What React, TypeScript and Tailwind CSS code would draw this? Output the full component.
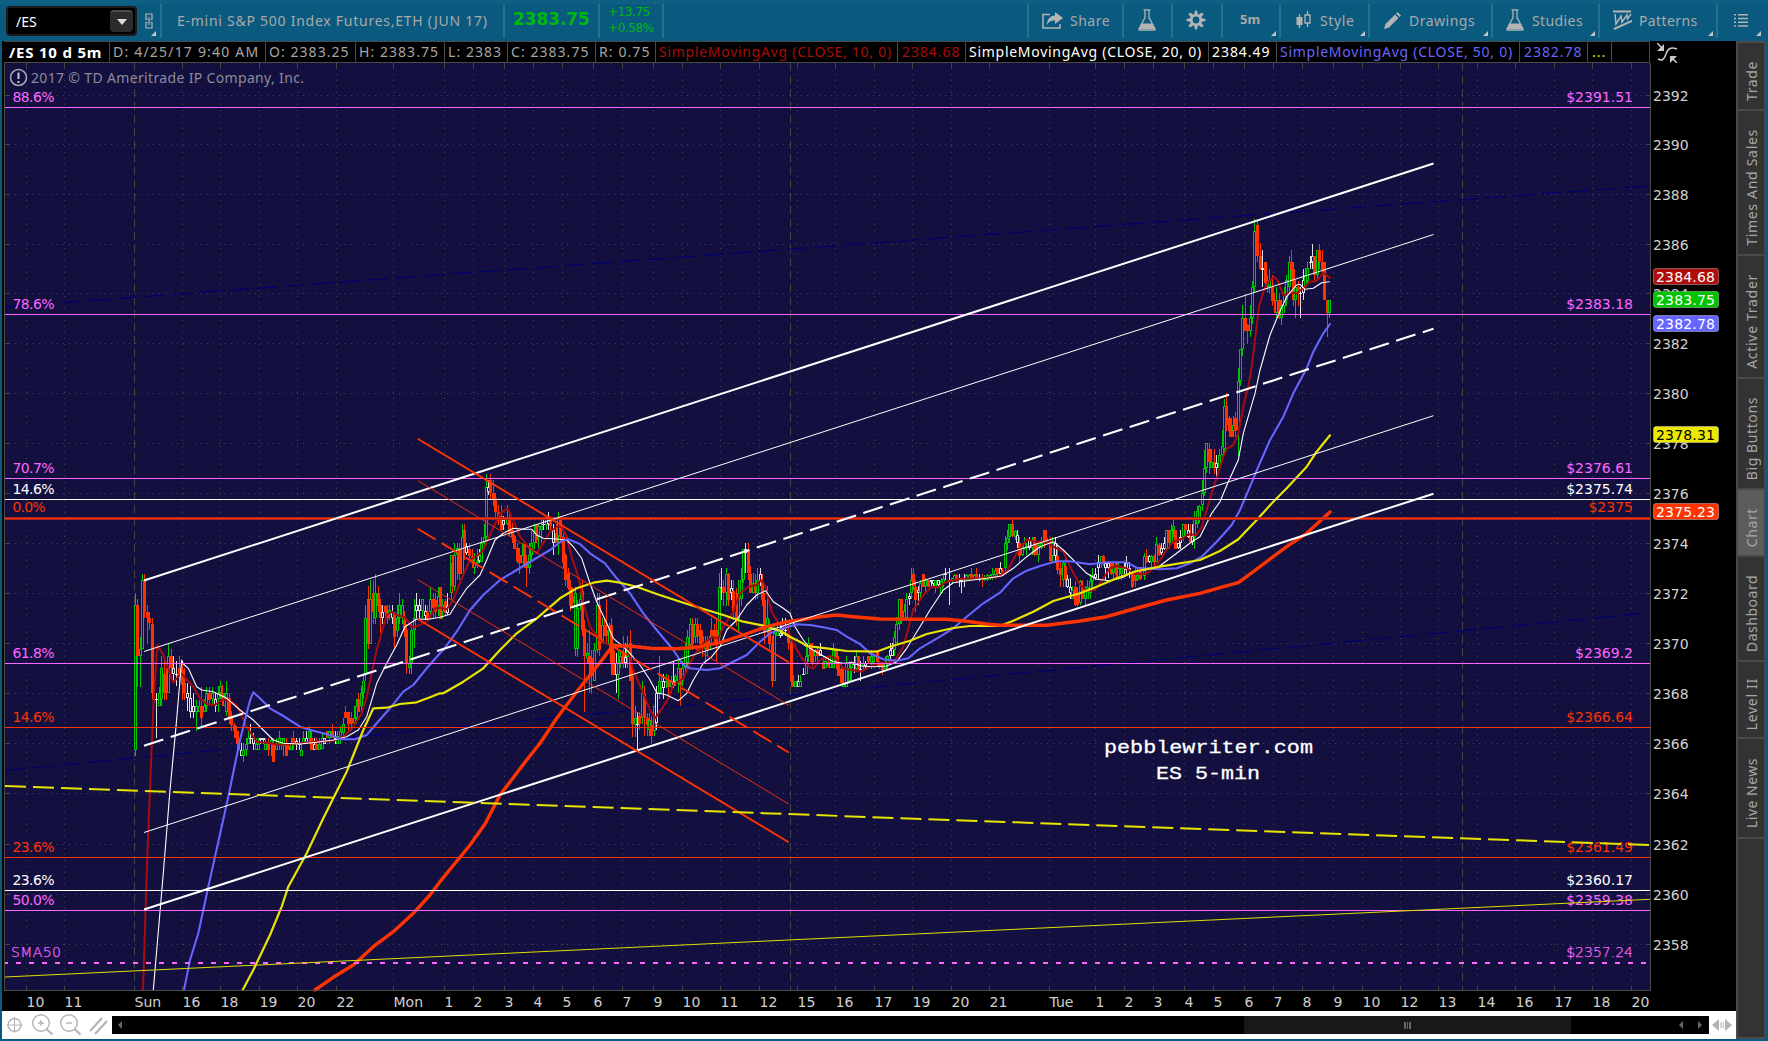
import type { ReactNode } from 'react'

const SANS = "font-['Noto_Sans','Open_Sans',sans-serif]";

type Part = { ox: number; oy: number; pts: string };

// every part is stored in thirds of a pixel, relative to its own origin
const ORIGINS = [
  [100, 540],
  [390, 420],
  [780, 500],
  [1140, 200],
];

const toParts = (rows: string[]): Part[] =>
  rows.map((pts, i) => ({ ox: ORIGINS[i][0], oy: ORIGINS[i][1], pts }));

const joinLine = (rows: string[]) => {
  const out: string[] = [];
  let last = -1;
  toParts(rows).forEach(({ ox, oy, pts }) => {
    pts.split(',').forEach((p) => {
      const [px, py] = p.trim().split(' ').map(Number);
      const x = ox + px / 3;
      if (x <= last) return;
      last = x;
      out.push(`${x.toFixed(1)},${(oy + py / 3).toFixed(1)}`);
    });
  });
  return out.join(' ');
};

const SMA10 = joinLine([
  '129 1350,142 950,160 500,172 315,190 345,220 428,243 400,280 440,300 475,320 492,345 495,370 478,395 485,410 495,440 560,470 605,500 608,540 614,600 610,650 605,700 602,730 590,760 560,785 520,800 470,830 330,860 225,877 215,890 225,915 232,935 262,960 255,985 240,1005 205,1020 203',
  '150 563,170 568,190 540,215 475,240 420,265 405,280 390,300 345,330 280,352 265,370 300,390 350,415 380,440 400,460 370,480 335,500 320,515 320,530 350,545 410,565 470,580 550,600 620,630 660,665 680,690 675,715 690,730 750,760 820,780 870,795 895,820 860,835 835,850 795,880 775,910 710,940 670,965 652,985 655,1000 620,1030 575,1050 520,1075 500,1100 495,1113 480,1125 495,1145 575,1165 610,1190 620,1210 670,1235 715,1260 742',
  '70 490,100 506,120 480,150 468,170 478,190 505,215 510,245 515,270 500,300 487,320 490,345 480,370 440,400 330,430 285,455 260,475 262,500 245,540 236,600 235,650 232,680 215,710 160,740 118,765 125,800 125,820 140,850 155,870 200,900 255,920 272,945 270,970 235,990 205,1010 198,1040 205,1065 222,1095 222',
  '25 1118,50 1095,80 1050,100 1025,130 1015,145 1003,170 1005,185 980,200 930,215 880,235 820,250 770,262 745,280 735,295 700,310 620,325 560,335 500,345 420,357 320,370 275,385 245,403 230,415 245,430 285,450 278,470 280,490 265,510 245,530 243,550 218,570 234',
]);

const SMA20 = joinLine([
  '160 1350,190 1000,210 750,228 560,245 360,250 372,265 385,290 440,305 450,340 455,380 475,420 510,460 540,490 570,520 600,550 610,600 612,650 607,700 600,740 590,775 570,800 530,830 430,860 370,890 315,915 260,950 237,985 238,1020 232',
  '150 592,180 583,200 550,230 505,270 465,290 420,315 360,340 340,370 325,400 328,425 328,440 345,460 355,500 357,530 360,550 380,575 415,600 490,620 545,650 610,670 655,700 680,720 700,750 735,780 780,800 818,830 825,865 842,890 820,910 780,940 730,965 710,990 680,1010 630,1040 600,1070 555,1100 525,1127 512,1150 545,1180 565,1200 580,1215 620,1240 660,1260 685',
  '70 430,90 455,130 468,160 485,190 490,215 488,245 498,280 500,320 498,350 485,380 445,420 380,450 330,490 270,520 248,560 242,620 235,665 228,700 205,740 170,780 140,820 125,850 150,890 190,920 220,950 238,990 242,1030 232,1060 215',
  '50 1105,90 1075,130 1045,155 1025,180 1010,200 970,215 940,240 905,265 845,295 780,310 700,345 580,360 510,390 405,415 345,440 290,470 255,480 253,495 268,520 265,545 248,568 245',
]);

const SMA50 = joinLine([
  '252 1350,270 1260,295 1180,325 1040,345 950,385 770,420 600,445 500,452 475,460 457,475 470,510 505,550 528,600 560,640 572,690 585,720 598,765 598,800 585,830 550,870 505,910 455,940 435,980 385,1020 340',
  '160 690,200 635,240 570,280 525,330 480,380 450,430 420,480 390,515 363,535 358,570 372,600 400,645 430,680 475,720 520,760 580,800 630,850 690,880 735,900 745,950 750,990 745,1040 720,1070 705,1110 665,1140 640,1180 625,1220 613',
  '90 375,130 382,170 390,200 410,240 432,270 460,310 478,350 482,385 475,420 445,480 410,520 385,560 350,610 310,660 278,700 235,740 212,780 198,830 184,870 184,930 193,980 187,1040 187,1070 203',
  '60 1108,110 1105,150 1090,185 1070,230 1025,275 975,300 930,330 860,355 800,390 720,430 650,460 580,500 505,520 455,550 400,570 372',
]);

const SMA100 = joinLine([
  '428 1350,460 1290,510 1185,545 1100,565 1040,620 940,670 835,700 775,740 695,790 570,820 505,860 503,900 492,950 487,990 472,1020 460',
  '160 820,220 785,280 745,330 690,380 640,440 595,510 535,560 505,610 488,650 482,690 488,740 500,800 522,880 548,950 570,1000 585,1060 605,1120 617,1170 632,1200 650,1235 668',
  '80 438,140 445,200 453,290 455,330 440,390 422,440 402,520 384,570 378,660 378,700 362,760 335,820 303,900 280,950 260,1010 235,1070 213',
  '60 1100,180 1080,240 1053,295 1018,350 960,400 905,440 865,500 800,530 755,570 706',
]);

const SMA200 = joinLine([
  '645 1350,700 1312,760 1275,820 1220,880 1175,940 1120,990 1065,1020 1025',
  '240 1275,285 1212,330 1125,410 1020,450 970,500 895,560 815,600 765,640 715,668 677,720 678,780 685,860 686,930 680,990 668,1060 645,1130 620,1190 605,1230 600',
  '120 350,170 345,220 350,300 357,500 358,560 364,620 372,660 376,800 376,900 363,980 350,1050 330',
  '80 1200,180 1180,240 1163,295 1148,340 1115,400 1070,440 1040,500 1000,570 936',
]);

// kind x high bodyTop bodyBottom low
const CANDLES = toParts([
  'g 106 160 196 631 650,r 112 178 196 350 442,g 121 292 328 350 442,g 127 102 122 328 328,r 133 102 122 217 235,r 142 196 217 235 312,r 148 217 235 250 272,r 157 235 254 460 480,r 161 380 460 480 480,w 169 460 478 478 594,g 178 443 460 498 498,g 184 350 385 478 498,r 193 365 404 460 480,r 199 385 404 460 480,g 205 310 350 460 460,r 214 328 350 385 404,w 220 350 385 404 430,w 229 365 404 404 440,r 238 350 385 412 430,r 247 370 390 435 480,r 254 385 430 460 480,w 262 430 460 475 515,w 271 440 475 517 535,w 280 460 498 517 535,g 289 480 498 517 575,g 298 480 498 517 517,r 304 443 498 535 558,g 312 478 498 517 517,g 319 443 460 498 517,r 327 443 460 480 498,g 337 443 460 478 498,w 345 460 478 498 517,g 354 440 460 478 517,g 361 423 440 460 478,r 366 435 460 480 498,g 373 460 478 498 498,g 380 423 460 517 530,r 388 460 475 535 552,r 395 515 530 555 575,r 402 550 555 575 595,r 410 560 575 594 612,r 416 575 594 630 632,w 424 610 630 650 650,g 430 610 632 650 668,g 438 595 612 632 650,g 445 575 594 612 612,w 452 552 594 594 612,w 460 580 594 612 632,g 468 594 612 630 630,g 475 594 612 630 630,w 482 594 594 600 612,w 490 594 594 600 612,g 497 594 612 630 630,r 505 594 612 630 650,g 513 594 600 612 650,r 521 594 612 668 668,g 529 594 612 632 632,g 537 575 594 612 632,g 544 594 594 612 632,g 551 594 594 620 650,r 558 594 612 650 650,r 566 612 620 632 632,g 574 594 612 632 632,r 581 575 594 612 632,w 590 594 605 612 632,w 598 594 612 612 632,g 604 612 630 650 650,g 611 575 594 612 612,w 619 575 594 612 612,g 627 560 575 594 612,r 635 575 594 632 632,w 643 594 612 632 632,r 650 594 612 632 632,g 658 594 612 630 632,g 666 580 594 628 628,w 673 594 594 612 612,r 681 575 575 594 594,g 688 575 575 594 612,r 697 552 575 594 594,w 705 575 594 600 612,g 713 575 590 612 612,g 721 560 575 600 612,g 729 535 552 580 594,r 737 498 517 535 535,r 746 517 517 552 575,r 754 517 535 552 575,g 762 500 535 550 565,g 769 478 498 535 552,r 775 460 478 517 517,g 783 440 460 498 517,g 790 404 423 460 478,g 796 196 235 404 423,r 805 140 178 312 328,g 811 122 178 312 312,r 819 122 160 217 254,g 826 102 160 235 254,r 834 140 160 200 217,r 841 178 196 235 280,w 848 196 217 235 254,r 856 196 200 217 235,r 862 196 210 235 254,g 869 196 210 225 240,w 877 196 217 235 254,r 884 217 217 292 325,g 891 196 235 275 292,g 898 160 196 235 254,g 907 178 196 235 254,r 914 215 240 270 292,r 920 254 272 370 404,g 928 350 370 385 404,g 935 254 272 370 404,g 942 178 235 272 325',
  'w 80 520 556 575 595,w 88 538 556 575 595,g 97 538 538 575 595,w 105 556 575 590 600,r 113 556 577 597 597,g 121 502 538 577 597,r 130 520 538 565 595,r 137 520 540 577 595,g 144 502 530 560 590,r 151 502 502 597 597,g 158 538 556 577 597,r 166 538 545 580 590,w 173 520 560 580 585,g 183 406 406 520 540,r 188 406 430 500 520,g 194 370 406 502 515,g 203 370 385 406 480,r 209 370 388 463 480,g 218 312 352 463 463,r 223 312 330 388 420,w 230 370 380 400 406,r 238 370 388 410 430,r 246 388 410 430 445,g 254 400 430 445 463,g 262 388 425 430 445,w 268 388 406 425 430,g 275 352 370 428 428,g 282 312 352 370 388,g 290 162 202 352 370,w 296 180 202 217 225,r 302 162 180 220 240,r 310 180 220 240 260,r 316 220 236 276 292,r 325 255 276 292 315,r 333 255 290 330 330,w 340 290 300 315 330,g 352 255 298 312 315,r 359 280 298 340 352,r 366 310 330 352 370,r 373 345 350 388 388,r 381 370 385 425 430,r 388 385 406 430 463,g 396 370 406 430 430,r 403 370 372 440 445,r 409 406 425 445 502,g 418 370 406 445 463,g 425 335 370 406 425,g 432 312 340 370 388,r 438 312 315 360 370,g 446 312 318 352 385,g 453 298 318 330 370,w 460 298 312 312 330,g 468 298 298 315 330,w 475 276 292 312 330,r 482 290 300 318 330,w 490 312 330 370 406,r 498 312 340 370 370,g 506 276 298 350 406,r 512 292 298 352 370,r 520 340 352 430 445,r 527 400 406 480 500,r 534 445 460 505 512,r 541 480 502 560 575,r 548 502 530 550 560,g 556 502 520 688 710,g 563 540 565 688 712,g 570 490 538 560 570,r 577 480 515 630 650,r 583 600 625 710 878,g 592 670 700 715 730,r 598 630 708 730 820,r 604 690 715 770 820,g 612 670 690 785 785,g 621 520 556 690 700,r 628 520 556 690 710,g 636 595 615 670 670,r 643 600 615 640 650,r 650 538 630 650 670,g 657 610 630 675 690,r 665 595 615 730 765,r 671 670 690 765 765,w 678 700 730 765 820,g 685 690 730 765 838,g 692 690 710 730 745,r 700 650 700 730 745,w 707 670 712 730 745,g 713 650 690 712 745,r 721 630 670 785 785,r 728 740 770 912 952,g 736 858 895 915 952,w 743 878 912 912 990,r 749 878 890 912 930,g 757 785 820 895 912,r 764 800 820 895 950,r 772 880 895 915 950,g 779 880 900 930 950,r 785 890 915 950 970,g 793 858 860 935 950,w 799 800 820 910 930,g 808 708 785 820 838,g 814 762 785 805 820,w 820 762 785 805 838,g 828 762 785 790 805,r 835 765 780 802 838,g 843 770 785 802 820,w 850 725 785 800 805,g 857 762 770 785 800,g 864 715 745 790 820,r 871 745 762 795 860,g 878 725 745 785 800,g 886 670 688 745 762,g 893 630 652 730 745,g 901 595 612 675 690,r 908 595 612 672 690,g 915 595 612 652 670,r 922 595 612 650 670,r 930 612 632 672 690,r 938 632 650 672 712,g 945 650 670 688 730,r 952 650 665 690 710,g 960 630 650 672 690,r 964 595 630 650 672,r 972 612 632 652 672,r 980 600 632 672 725,g 988 460 502 652 670,w 995 445 502 502 540,r 1001 480 502 520 560,g 1010 445 463 520 560,r 1016 460 463 540 560,w 1024 480 505 520 540,r 1031 480 515 578 600,r 1038 505 578 598 620,g 1046 480 520 598 635,g 1054 445 480 538 560,g 1060 388 388 480 490,w 1067 370 388 400 460,r 1075 370 390 460 480,r 1082 440 462 520 520,g 1090 460 490 520 520,r 1097 463 490 520 540,g 1103 445 480 520 538,w 1112 445 463 490 500,r 1118 463 485 540 560,r 1124 520 540 640 672,g 1131 500 595 630 640,r 1139 600 630 672 690,r 1147 650 670 785 802,g 1154 620 640 785 785,g 1162 612 635 650 650,w 1170 612 640 650 655,w 1178 595 615 630 650,w 1185 595 630 632 650,r 1195 612 640 670 690,r 1203 650 670 785 802,r 1210 765 785 802 802,g 1217 785 785 802 802,w 1225 765 785 802 802,g 1232 765 785 802 802,w 1240 745 762 765 765',
  'g 78 440 470 522 522,g 85 412 430 468 488,r 91 430 432 468 488,r 98 430 450 490 500,g 106 448 455 468 488,r 113 440 450 470 488,w 121 430 450 468 470,r 130 468 488 508 508,g 137 468 485 505 505,r 145 468 488 500 506,g 152 468 488 505 505,g 160 430 450 505 505,r 168 450 452 490 508,r 176 470 490 530 530,r 183 490 508 550 550,g 191 505 550 562 562,g 199 470 490 562 562,g 207 485 505 545 545,g 215 485 488 505 540,w 222 470 488 495 520,g 229 450 468 508 510,r 235 468 470 508 512,w 241 485 508 512 545,g 249 468 490 500 508,w 257 485 490 500 508,r 266 468 470 488 490,g 274 450 470 490 508,g 281 468 470 488 490,r 292 450 452 488 500,r 299 485 488 500 508,r 307 488 490 510 525,g 315 468 488 508 508,g 322 465 470 490 508,w 330 430 450 470 490,w 337 430 445 468 470,g 343 395 412 450 468,g 350 352 372 430 430,g 357 298 298 372 390,r 364 298 298 352 372,g 372 312 335 360 360,g 380 280 298 355 360,w 387 280 290 298 316,g 393 205 240 280 298,r 400 205 222 260 270,r 407 240 262 300 338,w 414 260 270 280 316,g 422 240 250 280 298,r 429 222 222 262 262,g 437 235 240 260 280,r 445 240 240 262 262,w 453 240 242 248 262,w 460 240 240 252 262,g 467 240 242 260 280,w 475 240 240 255 262,g 483 235 245 280 280,g 490 222 238 250 262,w 497 205 222 222 240,w 508 205 240 242 317,g 516 235 235 245 250,g 523 222 225 240 245,r 530 222 225 240 248,w 538 222 235 240 262,w 545 238 240 244 280,w 553 222 235 240 262,g 560 222 225 240 245,g 568 222 225 240 245,r 575 205 222 238 240,g 582 222 225 238 242,r 590 205 222 238 242,w 598 222 235 240 245,r 606 222 235 238 262,g 614 225 235 240 245,g 622 222 225 240 243,g 630 222 225 238 242,g 638 205 222 235 240,g 645 205 210 225 238,r 653 205 205 222 235,w 660 186 205 222 228,r 667 205 210 225 230,g 675 110 130 205 222,g 681 90 115 130 150,g 688 72 74 112 130,r 697 55 74 110 112,g 705 90 95 112 120,w 712 90 105 130 145,r 718 112 130 168 186,g 726 130 145 165 168,g 733 112 130 148 150,g 740 130 140 145 165,w 748 112 120 145 150,g 756 112 125 145 165,r 763 112 112 165 168,r 770 130 145 165 165,g 776 130 135 165 188,g 784 112 130 145 148,r 792 90 92 130 145,r 800 92 115 130 130,r 810 112 130 185 188,g 818 112 130 170 190,w 826 112 130 168 190,r 833 130 168 210 222,r 841 186 205 225 262,g 849 186 190 240 262,r 857 175 200 240 262,w 863 225 238 262 265,w 870 235 262 280 298,g 878 260 270 298 298,r 886 245 262 316 318,r 893 262 280 317 318,g 900 240 245 310 316,r 907 240 262 298 298,g 915 260 270 298 318,g 922 240 262 298 298,g 930 222 245 280 298,g 938 205 225 245 262,w 945 205 222 235 240,w 955 165 186 205 240,g 963 168 168 190 205,r 970 165 168 190 200,w 977 186 190 205 240,w 985 186 190 205 235,r 993 186 190 222 225,g 1001 190 200 220 240,r 1008 186 190 225 240,g 1016 186 205 238 240,g 1024 205 205 222 240,w 1032 186 205 208 222,w 1040 168 190 210 230,w 1048 186 205 212 235,r 1058 222 222 262 264,r 1066 205 225 245 262,g 1073 205 225 240 245,r 1082 205 215 238 240',
  'g 12 1060 1068 1130 1140,r 19 1048 1068 1088 1090,w 27 1066 1068 1088 1090,g 35 1065 1068 1088 1105,r 43 1066 1068 1088 1105,g 50 1012 1032 1088 1088,r 57 1030 1035 1065 1068,w 65 1030 1045 1060 1065,w 72 1012 1030 1048 1050,g 80 990 992 1048 1048,r 87 990 992 1030 1048,g 94 972 990 1030 1030,g 100 958 978 992 1012,r 107 990 992 1048 1048,w 115 1030 1030 1045 1048,w 122 990 1012 1030 1048,g 130 972 974 1012 1025,r 137 972 974 992 1012,w 144 972 990 1012 1015,r 152 972 1012 1028 1030,w 158 972 1010 1028 1035,g 164 935 955 1012 1048,g 171 920 935 972 985,g 178 915 918 955 970,g 187 840 880 915 935,g 194 750 805 880 890,g 200 730 730 805 820,r 208 730 748 788 824,g 215 748 788 805 805,r 223 748 788 805 824,w 230 765 790 805 835,g 238 748 765 805 805,g 246 690 740 765 785,g 252 598 620 748 765,r 260 580 620 675 695,r 267 650 655 695 712,r 273 655 690 712 712,g 281 650 675 695 712,r 287 637 655 695 712,g 296 505 545 690 770,g 302 448 448 545 560,g 308 317 355 448 470,r 317 283 355 395 395,r 323 372 375 395 432,g 331 317 355 395 412,g 338 245 262 355 372,g 344 58 95 262 280,r 353 65 76 170 186,r 360 130 170 207 210,w 368 150 205 210 262,r 375 186 188 250 262,r 382 225 240 262 280,g 389 207 240 262 280,r 396 225 262 305 320,r 404 280 300 305 340,g 410 262 300 340 355,r 417 280 300 355 357,g 424 300 320 355 377,g 432 262 280 320 340,g 440 225 240 300 318,g 447 168 188 262 280,r 455 150 186 210 245,r 461 186 207 300 320,g 467 240 262 300 355,r 475 243 262 280 320,w 482 262 280 280 355,w 490 207 240 280 300,g 497 205 225 262 262,g 503 186 205 245 250,w 511 168 186 186 207,w 518 132 170 188 207,r 524 168 170 225 240,g 531 150 152 225 240,r 539 132 150 188 207,r 547 150 186 210 225,r 554 186 188 300 302,r 562 300 302 340 412,g 569 300 302 340 355',
]).flatMap(({ ox, oy, pts }) =>
  pts.split(',').map((row) => {
    const [kind, x, ...ys] = row.split(' ');
    const [hi, top, bottom, lo] = ys.map((y) => Math.floor(oy + Number(y) / 3));
    return { kind, x: Math.floor(ox + Number(x) / 3), hi, top, bottom, lo };
  })
);

const CANDLE_COLOR: Record<string, string> = { g: '#00c800', r: '#ff3300', w: '#e0e0e0' };

const TIMES: [number, string][] = [
  [26, '10'], [64, '11'], [134, 'Sun'], [182, '16'], [220, '18'], [259, '19'], [297, '20'], [336, '22'],
  [393, 'Mon'], [444, '1'], [473, '2'], [504, '3'], [533, '4'], [562, '5'], [593, '6'], [622, '7'],
  [653, '9'], [682, '10'], [720, '11'], [759, '12'], [797, '15'], [835, '16'], [874, '17'], [912, '19'],
  [951, '20'], [989, '21'], [1049, 'Tue'], [1095, '1'], [1124, '2'], [1153, '3'], [1184, '4'], [1213, '5'],
  [1244, '6'], [1273, '7'], [1302, '8'], [1333, '9'], [1362, '10'], [1400, '12'], [1438, '13'],
  [1477, '14'], [1515, '16'], [1554, '17'], [1592, '18'], [1631, '20'],
];

// y of 2392, 2390, 2388 ...
const PRICE_ROWS = [95, 144, 194, 244, 293, 343, 393, 443, 493, 543, 593, 643, 693, 743, 793, 844, 894, 944];

const PINK = '#ff66ff';
const ORANGE = '#ff3300';

// line y, text y, percent, price, color
const LEVELS: [number, number, string, string, string][] = [
  [107, 97, '88.6%', '$2391.51', PINK],
  [314, 304, '78.6%', '$2383.18', PINK],
  [478, 468, '70.7%', '$2376.61', PINK],
  [499, 489, '14.6%', '$2375.74', '#ffffff'],
  [518, 507, '0.0%', '$2375', ORANGE],
  [663, 653, '61.8%', '$2369.2', PINK],
  [727, 717, '14.6%', '$2366.64', ORANGE],
  [857, 847, '23.6%', '$2361.49', ORANGE],
  [890, 880, '23.6%', '$2360.17', '#ffffff'],
  [910, 900, '50.0%', '$2359.38', PINK],
];

const BADGES: [number, string, string, string][] = [
  [268, '2384.68', '#b00d0d', '#ffffff'],
  [291, '2383.75', '#00c400', '#ffffff'],
  [315, '2382.78', '#6666ff', '#ffffff'],
  [426, '2378.31', '#ece800', '#000000'],
  [503, '2375.23', '#ff3300', '#ffffff'],
];

const Chart = () => (
  <svg width="1732" height="948" viewBox="4 63 1732 948" fontFamily="'DejaVu Sans', sans-serif" fontSize="14">
    <rect x="4" y="63" width="1732" height="948" fill="#000" />
    <rect x="4" y="63" width="1646" height="927" fill="#131040" />
    <g stroke="#45453f" strokeWidth="1" shapeRendering="crispEdges">
      {PRICE_ROWS.map((row) => (
        <g key={row}>
          <line x1="9" x2="1646" y1={row + 0.5} y2={row + 0.5} strokeDasharray="1 5" />
          <line x1="4" x2="10" y1={row + 0.5} y2={row + 0.5} />
          <line x1="1646" x2="1650" y1={row + 0.5} y2={row + 0.5} />
        </g>
      ))}
      {TIMES.filter(([x]) => x !== 134).map(([x]) => (
        <g key={x}>
          <line x1={x + 0.5} x2={x + 0.5} y1="74" y2="986" strokeDasharray="1 5" />
          <line x1={x + 0.5} x2={x + 0.5} y1="63" y2="69" />
          <line x1={x + 0.5} x2={x + 0.5} y1="986" y2="990" />
        </g>
      ))}
      {[134, 790, 1462].map((x) => (
        <line key={x} x1={x + 0.5} x2={x + 0.5} y1="63" y2="990" strokeDasharray="8 5" />
      ))}
    </g>

    <g stroke="#00006e" strokeWidth="1.2" strokeDasharray="21 7">
      <line x1="5" y1="306.8" x2="1648" y2="186" />
      <line x1="5" y1="770.4" x2="1645" y2="613.2" />
    </g>

    {LEVELS.map(([y, ty, pct, price, color]) => (
      <g key={y} fill={color}>
        <text x="12.5" y={ty + 5} textLength={pct.length === 5 ? 42 : 33}>{pct}</text>
        <text x="1633" y={ty + 5} textAnchor="end">{price}</text>
      </g>
    ))}
    <g fill={PINK} stroke={PINK} strokeWidth="0.25" fontFamily="'DejaVu Sans Light','DejaVu Sans',sans-serif" fontWeight="200">
      <text x="11" y="957" textLength="50">SMA50</text>
      <text x="1633" y="957" textAnchor="end">$2357.24</text>
    </g>

    <g shapeRendering="crispEdges">
      {CANDLES.map(({ kind, x, hi, top, bottom, lo }, i) => {
        const color = CANDLE_COLOR[kind];
        if (kind === 'r') {
          return (
            <g key={i} fill={color}>
              <rect x={x} y={hi} width="1" height={Math.max(lo - hi, 1)} />
              <rect x={x - 1} y={top} width="3" height={Math.max(bottom - top, 1)} />
            </g>
          );
        }
        return (
          <g key={i}>
            <rect x={x} y={hi} width="1" height={Math.max(top - hi, 0)} fill={color} />
            <rect x={x} y={bottom} width="1" height={Math.max(lo - bottom, 0)} fill={color} />
            <rect x={x - 0.5} y={top + 0.5} width="2" height={Math.max(bottom - top - 1, 0.1)} fill="none" stroke={color} />
          </g>
        );
      })}
    </g>

    <g fill="none" strokeLinejoin="round" strokeLinecap="round">
      <polyline points={SMA10} stroke="#a80c0c" strokeWidth="2" />
      <polyline points={SMA20} stroke="#ffffff" strokeWidth="1.1" />
      <polyline points={SMA50} stroke="#6666ff" strokeWidth="2.1" />
      <polyline points={SMA100} stroke="#e8e600" strokeWidth="2.2" />
      <polyline points={SMA200} stroke="#ff3300" strokeWidth="3.4" />
    </g>

    <g shapeRendering="crispEdges">
      {LEVELS.map(([y, , , , color]) => (
        <rect key={y} x="4" y={y} width="1646" height="1" fill={color} />
      ))}
      <rect x="4" y="517" width="1646" height="3" fill="#a32420" />
      <rect x="4" y="518" width="1646" height="1" fill={ORANGE} />
      <line x1="4" x2="1650" y1="963" y2="963" stroke={PINK} strokeWidth="2" strokeDasharray="5 8" strokeDashoffset="1" />
    </g>

    <g stroke="#ffffff">
      <line x1="144" y1="580.5" x2="1433.5" y2="163.5" strokeWidth="2" />
      <line x1="144" y1="651.5" x2="1433.5" y2="234.5" strokeWidth="1" />
      <line x1="144" y1="745.7" x2="1433.5" y2="328.7" strokeWidth="2.1" strokeDasharray="20.3 7.7" />
      <line x1="144" y1="832.5" x2="1433.5" y2="415.7" strokeWidth="1" />
      <line x1="144" y1="909.5" x2="1433.5" y2="493.7" strokeWidth="2" />
    </g>
    <g stroke={ORANGE}>
      <line x1="417.7" y1="438.7" x2="788.7" y2="662.2" strokeWidth="1.9" />
      <line x1="417.7" y1="480.5" x2="788.7" y2="705.3" strokeWidth="0.9" />
      <line x1="417.7" y1="528.7" x2="788.7" y2="752.5" strokeWidth="1.9" strokeDasharray="21 7" />
      <line x1="417.7" y1="579.7" x2="788.7" y2="804" strokeWidth="0.9" />
      <line x1="417.7" y1="619" x2="788.7" y2="842.3" strokeWidth="1.9" />
    </g>
    <line x1="5" y1="786" x2="1649" y2="845" stroke="#e8e600" strokeWidth="2" strokeDasharray="21 7" />
    <line x1="5" y1="977" x2="1650" y2="899.3" stroke="#e0de00" strokeWidth="1" />

    <g fill="#fff" stroke="#fff" strokeWidth="0.3" fontFamily="'Liberation Mono', monospace" fontSize="19">
      <text x="1104" y="753" textLength="209" lengthAdjust="spacingAndGlyphs">pebblewriter.com</text>
      <text x="1156" y="779" textLength="104" lengthAdjust="spacingAndGlyphs">ES 5-min</text>
    </g>

    <g stroke="#4a4a4a" shapeRendering="crispEdges">
      <line x1="4.5" x2="4.5" y1="63" y2="990" />
      <line x1="4" x2="1651" y1="990.5" y2="990.5" />
      <line x1="1650.5" x2="1650.5" y1="63" y2="991" />
    </g>
    <g fill="#d0d0d0">
      {TIMES.map(([x, label]) => (
        <text key={x} x={x + 0.5} y="1007">{label}</text>
      ))}
      {PRICE_ROWS.map((row, i) => (
        <text key={row} x="1653" y={row + 6}>{2392 - i * 2}</text>
      ))}
    </g>
    {BADGES.map(([y, label, bg, fg]) => (
      <g key={label}>
        <rect x="1653.5" y={y + 0.5} width="65" height="16" rx="2.5" fill={bg} stroke="#ffffff" strokeOpacity="0.35" />
        <text x="1656" y={y + 13.5} fill={fg} textLength="59">{label}</text>
      </g>
    ))}

    <circle cx="18.5" cy="77.5" r="8" fill="none" stroke="#a5a5b0" strokeWidth="1.6" />
    <path d="M18.5 72.5v6.5M18.5 81v2" stroke="#c5c5cc" strokeWidth="2" />
    <text x="31" y="83" fill="#8c8a9c" fontFamily="'Noto Sans', sans-serif" fontSize="14" textLength="273">
      2017 © TD Ameritrade IP Company, Inc.
    </text>
  </svg>
);

const Flask = () => (
  <svg width="18" height="22" viewBox="0 0 18 22" fill="none" stroke="#b4b4b4">
    <path d="M5.5 .8h7M7 1v7.5L.9 20q-.3 1.2.8 1.2h14.6q1.100 0 .8-1.200L11 8.500V1" strokeWidth="1.300" />
    <path d="M4 14.500h10l3 6H1z" fill="#b4b4b4" stroke="none" />
  </svg>
);

const Gear = () => (
  <svg width="20" height="20" viewBox="-10 -10 20 20">
    <circle r="4.700" fill="none" stroke="#b4b4b4" strokeWidth="2.600" />
    {[0, 45, 90, 135, 180, 225, 270, 315].map((a) => (
      <path key={a} d="M-2-5L-1-9.500h2L2-5z" fill="#b4b4b4" transform={`rotate(${a})`} />
    ))}
  </svg>
);

type CellProps = {
  width: string;
  menu?: boolean;
  children?: ReactNode;
};

const Cell = ({ width, menu, children }: CellProps) => (
  <div className={`relative flex h-full shrink-0 items-center border-l-2 border-[#2a6f90] pb-[2px] ${width}`}>
    {children}
    {menu && (
      <svg className="absolute right-[3px] bottom-[2px]" width="5" height="5">
        <path d="M5 0v5H0z" fill="#c4c4c4" />
      </svg>
    )}
  </div>
);

const Toolbar = () => (
  <div className="flex h-[41px] items-stretch border-t-[4px] border-[#0d5f83] bg-[#0a5a7f] pr-1 pb-[3px] pl-[6px] text-[14px] text-[#a9a9a9]">
    <div className="mt-[2px] flex h-[30px] w-[131px] shrink-0 items-center justify-between rounded-sm border-2 border-[#1c1c1c] bg-black pr-[2px] pl-2">
      <span className="text-[14px] text-white">/ES</span>
      <div className="flex h-[22px] w-[23px] items-center justify-center rounded-sm border-t-2 border-[#4a4a4a] bg-[#2c2c2c]">
        <svg width="10" height="6"><path d="M0 0h10L5 6z" fill="#ddd" /></svg>
      </div>
    </div>
    <div className="relative w-[23px] shrink-0">
      <svg className="mt-[9px] ml-[8px]" width="8" height="16" fill="none" stroke="#b4b4b4" strokeWidth="1.200">
        <path d="M2.500 6.500H1V1h6v5.500H5.500M2.500 9.500H1V15h6V9.500H5.500M4 4v8" />
      </svg>
      <svg className="absolute right-[4px] bottom-[2px]" width="5" height="5"><path d="M5 0v5H0z" fill="#ccc" /></svg>
    </div>
    <Cell width="w-[343px]">
      <span className="pl-[15px] whitespace-nowrap tracking-[0.74px]">E-mini S&amp;P 500 Index Futures,ETH (JUN 17)</span>
    </Cell>
    <Cell width="w-[95px]">
      <span className="pl-[8px] font-['DejaVu_Sans',sans-serif] text-[17px] font-bold tracking-[-0.1px] text-[#00b80c]">2383.75</span>
    </Cell>
    <Cell width="w-[64px]">
      <div className="pl-[8px] font-['DejaVu_Sans',sans-serif] text-[12px] leading-[16px] tracking-[-0.4px] text-[#00b80c]">
        <div>+13.75</div>
        <div>+0.58%</div>
      </div>
    </Cell>
    <Cell width="w-[365px]" />
    <Cell width="w-[95px]">
      <svg className="ml-[13px]" width="21" height="17" fill="none" stroke="#b4b4b4">
        <path d="M8 2.500H1V16h17v-4" strokeWidth="1.500" />
        <path d="M13 0l8 6-8 6V8.500c-4 0-6 1-8 4.500 0-6 3-9 8-9.500z" fill="#b4b4b4" stroke="none" />
      </svg>
      <span className="pl-[7px] tracking-[0.5px]">Share</span>
    </Cell>
    <Cell width="w-[49px]"><div className="ml-[14px]"><Flask /></div></Cell>
    <Cell width="w-[50px]"><div className="ml-[13px]"><Gear /></div></Cell>
    <Cell width="w-[58px]" menu><span className="pl-[17px] text-[13px] font-bold">5m</span></Cell>
    <Cell width="w-[89px]" menu>
      <svg className="ml-[15px]" width="16" height="18" fill="none" stroke="#b4b4b4" strokeWidth="1.300">
        <path d="M3.500 3v14M11.500 0v4M11.500 12v4M9 4h5v8H9z" />
        <path d="M.5 6h6v8h-6z" fill="#b4b4b4" stroke="none" />
      </svg>
      <span className="pl-[8px] tracking-[0.6px]">Style</span>
    </Cell>
    <Cell width="w-[123px]" menu>
      <svg className="ml-[14px]" width="17" height="17" viewBox="0 0 17 17" fill="#b4b4b4">
        <path d="M0 17l1.500-5L11 2.500 14.500 6 5 15.500zM12 1.500L13.500 0 17 3.500 15.500 5z" />
      </svg>
      <span className="pl-[8px] tracking-[0.5px]">Drawings</span>
    </Cell>
    <Cell width="w-[107px]" menu>
      <div className="ml-[13px]"><Flask /></div>
      <span className="pl-[8px] tracking-[0.4px]">Studies</span>
    </Cell>
    <Cell width="w-[118px]" menu>
      <svg className="ml-[13px]" width="19" height="20" fill="none" stroke="#b4b4b4">
        <path d="M0 1.500h18M1 19l18-8" strokeWidth="2" />
        <path d="M2 4l1 10 5-8 1 6 5-7 .5 4L18 4" strokeWidth="1.500" />
      </svg>
      <span className="pl-[7px] tracking-[0.4px]">Patterns</span>
    </Cell>
    <Cell width="w-[48px]" menu>
      <svg className="ml-[16px]" width="14" height="13" fill="#b4b4b4">
        <path d="M0 0h2v1.500H0zM0 3.800h2v1.500H0zM0 7.500h2V9H0zM0 11.200h2v1.500H0zM4 0h10v1.500H4zM4 3.800h10v1.500H4zM4 7.500h10V9H4zM4 11.200h10v1.500H4z" />
      </svg>
    </Cell>
  </div>
);

const STATUS = [
  { text: '/ES 10 d 5m', cls: 'w-[106px] pl-[5px] font-bold text-white text-[15px] tracking-[0.8px]' },
  { text: 'D: 4/25/17 9:40 AM', cls: 'w-[156px] pl-[3px] text-[#a6a6a6] tracking-[1.2px]' },
  { text: 'O: 2383.25', cls: 'w-[90px] pl-[3px] text-[#a6a6a6] tracking-[1.05px]' },
  { text: 'H: 2383.75', cls: 'w-[89px] pl-[3px] text-[#a6a6a6] tracking-[1.05px]' },
  { text: 'L: 2383', cls: 'w-[63px] pl-[3px] text-[#a6a6a6] tracking-[1.05px]' },
  { text: 'C: 2383.75', cls: 'w-[88px] pl-[3px] text-[#a6a6a6] tracking-[1.05px]' },
  { text: 'R: 0.75', cls: 'w-[60px] pl-[3px] text-[#a6a6a6] tracking-[1.1px]' },
  { text: 'SimpleMovingAvg (CLOSE, 10, 0)', cls: 'w-[242px] pl-[3px] text-[#a80c0c] tracking-[0.72px]' },
  { text: '2384.68', cls: 'w-[68px] pl-1 text-[#a80c0c] tracking-[0.95px]' },
  { text: 'SimpleMovingAvg (CLOSE, 20, 0)', cls: 'w-[243px] pl-[3px] text-white tracking-[0.72px]' },
  { text: '2384.49', cls: 'w-[68px] pl-[3px] text-white tracking-[0.95px]' },
  { text: 'SimpleMovingAvg (CLOSE, 50, 0)', cls: 'w-[243px] pl-[3px] text-[#6666ff] tracking-[0.72px]' },
  { text: '2382.78', cls: 'w-[68px] pl-1 text-[#6666ff] tracking-[0.95px]' },
  { text: '...', cls: 'w-[24px] pl-1 text-[#e8e600] tracking-[1px]' },
  { text: '', cls: 'w-[38px]' },
];

const StatusRow = () => (
  <div className="flex h-[22px] bg-black text-[14px] leading-[20px]">
    {STATUS.map(({ text, cls }, i) => (
      <div key={i} className={`shrink-0 overflow-hidden border-t border-r border-b border-[#4a4a4a] leading-[20px] whitespace-nowrap ${cls}`}>
        {text}
      </div>
    ))}
    <svg className="mt-[2px] ml-[7px]" width="21" height="20" fill="none" stroke="#c8c8c8" strokeWidth="1.500">
      <path d="M1 16c4 2 6 1 8-5s5-7 11-5" />
      <path d="M0 0l5 5M20 20l-5-5" />
      <path d="M7 1v7H0zM13 20v-7h7z" fill="#c8c8c8" stroke="none" />
    </svg>
  </div>
);

const TABS = [
  { name: 'Trade', cls: 'h-[68px] bg-[#333] tracking-[0.6px]' },
  { name: 'Times And Sales', cls: 'h-[145px] bg-[#333] tracking-[0.7px]' },
  { name: 'Active Trader', cls: 'h-[123px] bg-[#333] tracking-[0.7px]' },
  { name: 'Big Buttons', cls: 'h-[111px] bg-[#333] tracking-[0.6px]' },
  { name: 'Chart', cls: 'h-[67px] bg-[#5c5c5c] tracking-[0.6px]' },
  { name: 'Dashboard', cls: 'h-[105px] bg-[#333] tracking-[0.5px]' },
  { name: 'Level II', cls: 'h-[77px] bg-[#333] tracking-[0.7px]' },
  { name: 'Live News', cls: 'h-[100px] bg-[#333] tracking-[0.5px]' },
];

const SideTabs = () => (
  <div className="flex w-[29px] flex-col border-t-2 border-r border-b-2 border-l-2 border-[#4a4a4a] bg-[#333]">
    {TABS.map(({ name, cls }) => (
      <div key={name} className={`flex shrink-0 items-center justify-center border-b-2 border-[#4a4a4a] pt-[10px] text-[14px] text-[#a6a6a6] ${cls}`}>
        <span className="rotate-180 whitespace-nowrap [writing-mode:vertical-rl]">{name}</span>
      </div>
    ))}
  </div>
);

const ScrollBar = () => (
  <div className="flex h-[28px] items-center bg-white">
    <svg width="110" height="28" fill="none" stroke="#b4b4b4" strokeWidth="1.400">
      <circle cx="12.500" cy="14" r="6.500" />
      <path d="M4.500 14h16M12.500 6v16" strokeWidth="1" />
      <circle cx="39" cy="12" r="8.300" />
      <path d="M36 12h6M39 9v6" />
      <path d="M44.500 18l6 5.500" strokeWidth="2.200" />
      <circle cx="67" cy="12" r="8.300" />
      <path d="M64 12h6" />
      <path d="M72.500 18l6 5.500" strokeWidth="2.200" />
      <path d="M88 20L100 7M93 23L105 10" strokeWidth="2.200" />
    </svg>
    <div className="flex h-[18px] w-[1597px] items-center bg-black">
      <svg className="ml-[6px]" width="4" height="8"><path d="M4 0v8L0 4z" fill="#666" /></svg>
      <div className="ml-[1122px] flex h-full w-[327px] items-center justify-center gap-px bg-[#181818]">
        <i className="h-[7px] w-[1.5px] bg-[#666]" />
        <i className="h-[7px] w-[1.5px] bg-[#666]" />
        <i className="h-[7px] w-[1.5px] bg-[#666]" />
      </div>
      <svg className="ml-[108px]" width="4" height="8"><path d="M4 0v8L0 4z" fill="#666" /></svg>
      <svg className="ml-[15px]" width="4" height="8"><path d="M0 0v8l4-4z" fill="#666" /></svg>
    </div>
    <svg className="ml-[3px]" width="20" height="12" fill="#b4b4b4">
      <path d="M7 0v12L0 6zM13 0v12l7-6zM8.500 3h1v6h-1zM10.700 3h1v6h-1z" />
    </svg>
  </div>
);

export default function App() {
  return (
    <div className={`h-[1041px] w-[1768px] overflow-hidden bg-[#0a5a7f] ${SANS}`}>
      <Toolbar />
      <div className="flex h-[998px] pl-[2px]">
        <div className="w-[1734px] bg-black">
          <div className="pl-[2px]">
            <StatusRow />
            <Chart />
          </div>
          <ScrollBar />
        </div>
        <SideTabs />
      </div>
    </div>
  );
}
